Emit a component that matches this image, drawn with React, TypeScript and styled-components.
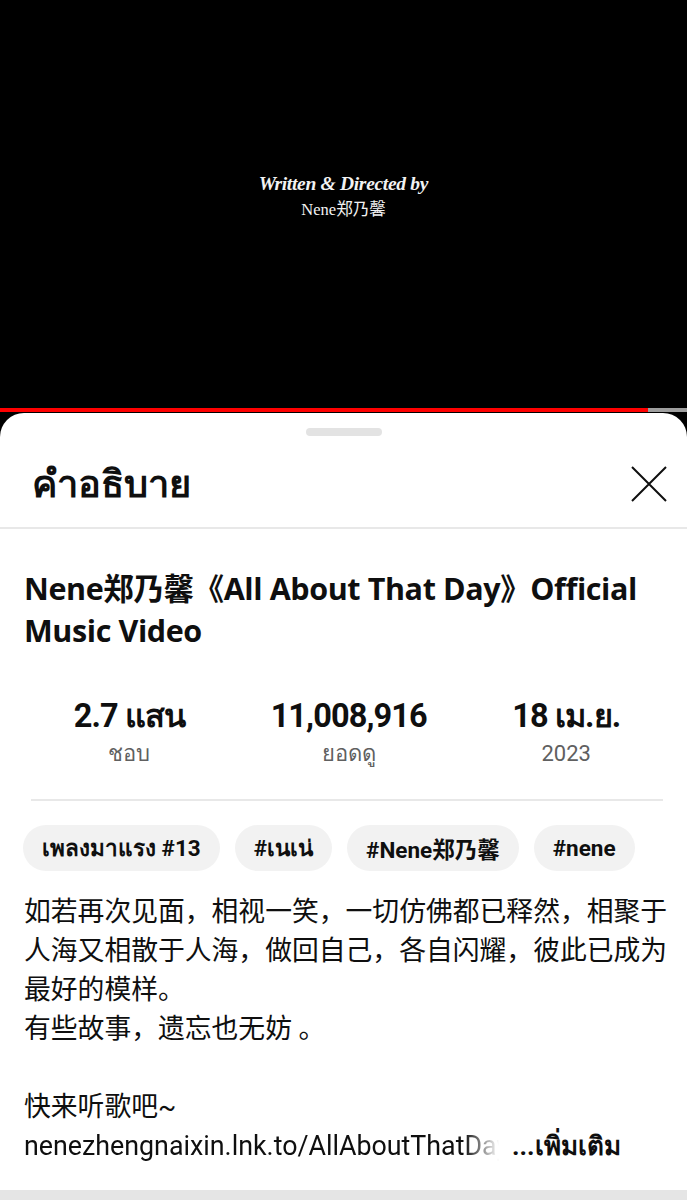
import React from 'react';
import styled, { createGlobalStyle } from 'styled-components';

const GlobalStyle = createGlobalStyle`
  html, body {
    margin: 0;
    padding: 0;
    background: #000;
  }
  * {
    box-sizing: border-box;
  }
`;

const Screen = styled.div`
  width: 687px;
  height: 1200px;
  overflow: hidden;
  display: flex;
  flex-direction: column;
  background: #000;
`;

const Player = styled.div`
  height: 408px;
  display: flex;
  flex-direction: column;
  align-items: center;
  justify-content: center;
  padding-bottom: 16px;
  color: #f2f2f2;
`;

const Credit = styled.div`
  font-family: 'Liberation Serif', 'DejaVu Serif', serif;
  font-style: italic;
  font-weight: 700;
  font-size: 19.5px;
  letter-spacing: -0.3px;
`;

const CreditName = styled.div`
  font-family: 'Liberation Serif', 'Noto Sans CJK SC', serif;
  font-size: 16.5px;
  margin-top: 1px;
`;

const Progress = styled.div`
  height: 4px;
  display: flex;
  background: #9e9e9e;
`;

const Played = styled.div`
  height: 100%;
  background: #ff0000;
`;

const Sheet = styled.div`
  flex: 1;
  margin-top: 1px;
  background: #fff;
  border-radius: 24px 24px 0 0;
  display: flex;
  flex-direction: column;
  font-family: Roboto, 'Noto Sans', 'Noto Sans CJK SC', sans-serif;
  color: #0f0f0f;
`;

const Handle = styled.div`
  width: 76px;
  height: 8px;
  border-radius: 4px;
  background: #e3e3e3;
  margin: 15px auto 0;
`;

const Header = styled.div`
  height: 93px;
  display: flex;
  align-items: center;
  justify-content: space-between;
  padding: 4px 18px 0 32px;
  border-bottom: 2px solid #e8e8e8;
`;

const HeaderTitle = styled.h1`
  margin: 0;
  font-family: 'Noto Sans', Roboto, sans-serif;
  font-size: 38px;
  font-weight: 800;
`;

const CloseButton = styled.button`
  border: none;
  background: none;
  padding: 0;
  width: 40px;
  height: 40px;
  display: flex;
  align-items: center;
  justify-content: center;
`;

const Body = styled.div`
  flex: 1;
  padding: 38px 24px 0;
  overflow: hidden;
`;

const VideoTitle = styled.h2`
  margin: 0;
  font-family: 'Open Sans', 'Noto Sans CJK SC', sans-serif;
  font-size: 30.5px;
  font-weight: 700;
  line-height: 42px;
  letter-spacing: -0.4px;
`;

const Stats = styled.div`
  display: flex;
  justify-content: space-around;
  margin-top: 46px;
  padding-bottom: 30px;
  border-bottom: 2px solid #e8e8e8;
  margin-left: 7px;
`;

const Stat = styled.div`
  display: flex;
  flex-direction: column;
  align-items: center;
`;

const StatValue = styled.div`
  font-family: Roboto, 'Noto Sans', sans-serif;
  font-size: 32.5px;
  font-weight: 700;
  letter-spacing: -0.9px;
  line-height: 38px;
`;

const StatLabel = styled.div`
  font-size: 22px;
  color: #606060;
  margin-top: 4px;
  line-height: 30px;
`;

const Chips = styled.div`
  display: flex;
  gap: 15px;
  margin-top: 24px;
  margin-left: -1px;
`;

const Chip = styled.span`
  height: 46px;
  padding: 0 19px;
  border-radius: 23px;
  background: #f2f2f2;
  display: inline-flex;
  align-items: center;
  font-family: Roboto, 'Noto Sans', 'Noto Sans CJK SC', sans-serif;
  font-size: 22.5px;
  font-weight: 700;
`;

const Description = styled.div`
  margin-top: 22px;
  font-family: Roboto, 'Noto Sans CJK SC', sans-serif;
  font-size: 26.8px;
  line-height: 39px;
  white-space: pre;
`;

const LinkLine = styled.div`
  display: flex;
  align-items: baseline;
`;

const LinkText = styled.span`
  width: 475px;
  overflow: hidden;
  white-space: nowrap;
  -webkit-mask-image: linear-gradient(to right, #000 440px, transparent 475px);
  mask-image: linear-gradient(to right, #000 440px, transparent 475px);
`;

const More = styled.span`
  margin-left: 13px;
  font-weight: 700;
  font-size: 26px;
`;

const BottomBar = styled.div`
  height: 10px;
  background: #e5e5e5;
`;

const stats = [
  { value: '2.7 แสน', label: 'ชอบ' },
  { value: '11,008,916', label: 'ยอดดู' },
  { value: '18 เม.ย.', label: '2023' },
];

const tags = ['เพลงมาแรง #13', '#เนเน่', '#Nene郑乃馨', '#nene'];

const text = `如若再次见面，相视一笑，一切仿佛都已释然，相聚于
人海又相散于人海，做回自己，各自闪耀，彼此已成为
最好的模样。
有些故事，遗忘也无妨 。

快来听歌吧~`;

export default function App() {
  const progress = 648 / 687;
  return (
    <>
      <GlobalStyle />
      <Screen>
        <Player>
          <Credit>Written &amp; Directed by</Credit>
          <CreditName>Nene郑乃馨</CreditName>
        </Player>
        <Progress>
          <Played style={{ width: `${progress * 100}%` }} />
        </Progress>
        <Sheet>
          <Handle />
          <Header>
            <HeaderTitle>คำอธิบาย</HeaderTitle>
            <CloseButton aria-label="close">
              <svg width="36" height="36" viewBox="0 0 36 36">
                <path d="M1 1L35 35M35 1L1 35" stroke="#0f0f0f" strokeWidth="2" fill="none" />
              </svg>
            </CloseButton>
          </Header>
          <Body>
            <VideoTitle>Nene郑乃馨《All About That Day》Official Music Video</VideoTitle>
            <Stats>
              {stats.map((s) => (
                <Stat key={s.label}>
                  <StatValue>{s.value}</StatValue>
                  <StatLabel>{s.label}</StatLabel>
                </Stat>
              ))}
            </Stats>
            <Chips>
              {tags.map((t) => (
                <Chip key={t}>{t}</Chip>
              ))}
            </Chips>
            <Description>
              {text}
              <LinkLine>
                <LinkText>nenezhengnaixin.lnk.to/AllAboutThatDay</LinkText>
                <More>...เพิ่มเติม</More>
              </LinkLine>
            </Description>
          </Body>
          <BottomBar />
        </Sheet>
      </Screen>
    </>
  );
}
